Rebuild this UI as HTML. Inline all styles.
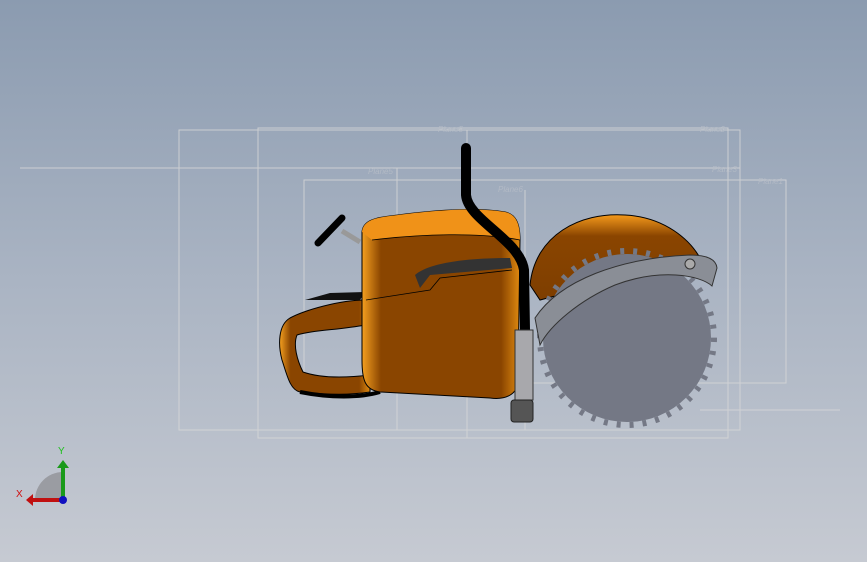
<!DOCTYPE html>
<html><head><style>
body{margin:0;width:867px;height:562px;overflow:hidden;background:linear-gradient(#8b9bb0,#aab4c3 50%,#c6cad2);font-family:"Liberation Sans",sans-serif}
svg{position:absolute;left:0;top:0}
</style></head><body>
<svg width="867" height="562" viewBox="0 0 867 562">
<defs>
<linearGradient id="o" x1="0" y1="0" x2="0" y2="1"><stop offset="0" stop-color="#f59a1c"/><stop offset=".25" stop-color="#8a4500"/><stop offset="1" stop-color="#7e3e00"/></linearGradient>
<linearGradient id="oh" x1="0" y1="0" x2="1" y2="0"><stop offset="0" stop-color="#f5a020"/><stop offset=".12" stop-color="#8a4500"/><stop offset=".88" stop-color="#8a4500"/><stop offset="1" stop-color="#e08a10"/></linearGradient>
</defs>
<g fill="none" stroke="#d8d8d8" stroke-width="1" opacity=".8">
<line x1="20" y1="168" x2="740" y2="168"/>
<rect x="179" y="130" width="561" height="300"/>
<rect x="258" y="128" width="470" height="310"/>
<rect x="304" y="180" width="482" height="203"/>
<line x1="397" y1="168" x2="397" y2="430"/>
<line x1="467" y1="130" x2="467" y2="438"/>
<line x1="525" y1="190" x2="525" y2="430"/>
<line x1="700" y1="410" x2="840" y2="410"/>
</g>
<g font-size="8" fill="#b8bec8" font-style="italic" opacity=".8">
<text x="438" y="132">Plane5</text><text x="700" y="132">Plane2</text><text x="368" y="174">Plane5</text><text x="498" y="192">Plane6</text><text x="712" y="172">Plane3</text><text x="758" y="184">Plane1</text>
</g>
<path d="M530 285 C535 235 580 212 625 215 C665 217 690 240 700 258 L540 300 Z" fill="url(#o)" stroke="#000" stroke-width="1"/>
<circle cx="627" cy="338" r="84" fill="#747885"/>
<circle cx="627" cy="338" r="87" fill="none" stroke="#747885" stroke-width="6" stroke-dasharray="4 9"/>
<path d="M535 318 C560 280 620 258 690 255 C705 255 716 258 717 268 L712 286 C700 275 660 268 615 285 C580 300 550 325 540 345 Z" fill="#8a8e96" stroke="#333" stroke-width="1"/>
<circle cx="690" cy="264" r="5" fill="#aaa" stroke="#333"/>
<path d="M365 300 C340 300 305 310 290 318 C278 325 278 345 282 360 C287 375 290 390 300 392 C330 395 350 395 370 392 L370 375 C345 378 320 378 303 372 C297 360 293 345 297 335 C312 330 340 330 365 325 Z" fill="url(#oh)" stroke="#000"/>
<path d="M300 392 C330 398 360 398 380 392" stroke="#000" stroke-width="4" fill="none"/>
<path d="M305 300 L330 293 L365 292 L360 300 Z" fill="#111"/>
<path d="M318 243 L342 218" stroke="#000" stroke-width="7" stroke-linecap="round"/>
<path d="M342 231 L360 242" stroke="#999" stroke-width="5"/>
<path d="M362 232 C363 222 372 218 390 216 C420 212 470 206 505 212 C515 214 520 222 520 240 L518 380 C518 395 505 400 490 398 L380 392 C365 390 362 380 362 360 Z" fill="url(#oh)" stroke="#000"/>
<path d="M362 232 C363 222 372 218 390 216 C420 212 470 206 505 212 C515 214 520 222 520 240 C480 232 420 234 372 240 Z" fill="#f09218"/>
<path d="M372 240 C420 234 480 232 520 240" stroke="#000" fill="none" stroke-width=".8"/>
<path d="M366 300 L430 290 L440 278 L512 270" stroke="#000" fill="none" stroke-width=".8"/>
<path d="M415 275 C430 262 470 258 510 258 L512 268 L430 275 L420 288 Z" fill="#333"/>
<path d="M466 148 L466 195 C468 220 520 240 524 270 L525 330" stroke="#000" stroke-width="10" fill="none" stroke-linecap="round"/>
<rect x="515" y="330" width="18" height="70" fill="#a8a8ac" stroke="#333"/>
<rect x="511" y="400" width="22" height="22" rx="3" fill="#555" stroke="#222"/>
<path d="M35 500 A28 28 0 0 1 63 472 L63 500 Z" fill="#9a9ca2"/>
<path d="M63 500 L63 468" stroke="#1a9a1a" stroke-width="4"/><path d="M57 468 L63 460 L69 468 Z" fill="#1a9a1a"/>
<path d="M63 500 L32 500" stroke="#c01010" stroke-width="4"/><path d="M33 494 L26 500 L33 506 Z" fill="#c01010"/>
<circle cx="63" cy="500" r="4" fill="#1010c0"/>
<text x="58" y="454" font-size="10" fill="#20c020">Y</text><text x="16" y="497" font-size="10" fill="#d01010">X</text>
</svg>
</body></html>
